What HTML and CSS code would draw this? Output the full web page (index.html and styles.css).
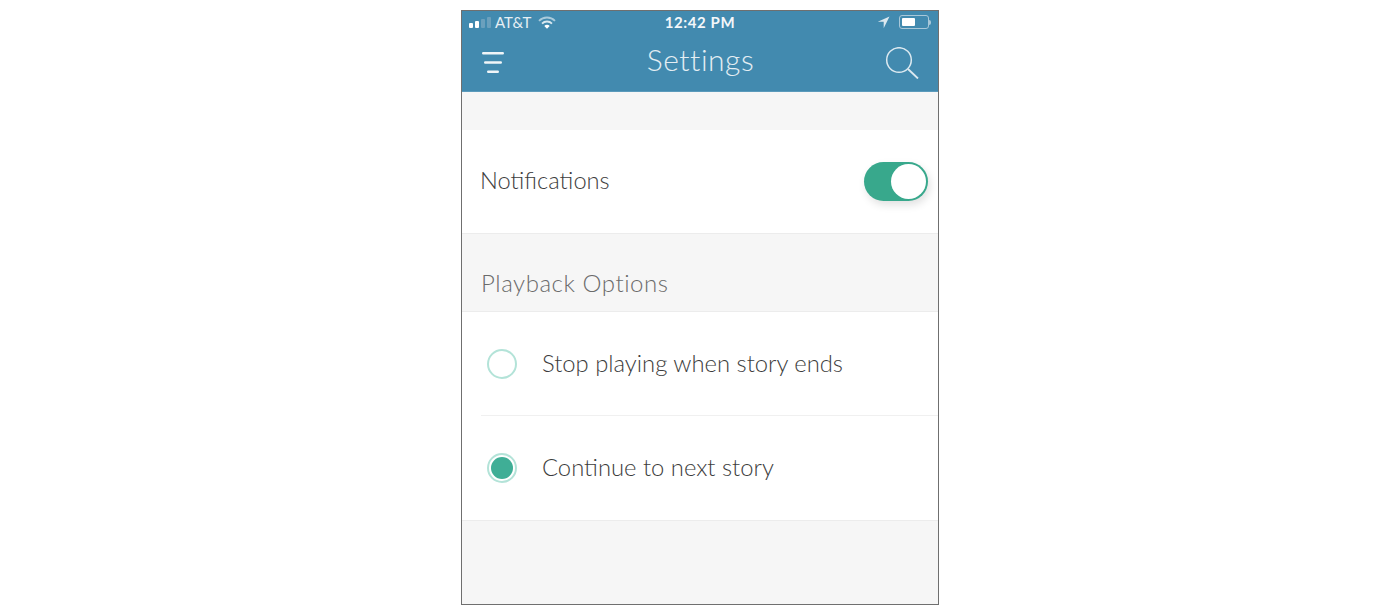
FILE: index.html
```html
<!DOCTYPE html>
<html lang="en">
<head>
    <meta charset="UTF-8">
    <title>Settings</title>
    <link rel="stylesheet" href="styles.css">
</head>
<body>
    <div class="phone">
        <div class="topbar">
            <div class="status">
                <div class="status-left">
                    <span class="signal"><i class="on"></i><i class="on"></i><i></i><i></i></span>
                    <span>AT&amp;T</span>
                    <svg class="wifi" width="18" height="13" viewBox="0 0 18 13">
                        <path d="M1 4.800a11.300 11.300 0 0 1 16 0" fill="none" stroke="#fff" stroke-opacity=".55" stroke-width="1.800"/>
                        <path d="M4 7.600a7 7 0 0 1 10 0" fill="none" stroke="#fff" stroke-opacity=".8" stroke-width="1.800"/>
                        <path d="M6.300 10a3.400 3.400 0 0 1 5.400 0L9 12.800z" fill="#fff"/>
                    </svg>
                </div>
                <div class="time">12:42 PM</div>
                <div class="status-right">
                    <svg width="13" height="13" viewBox="0 0 13 13">
                        <path d="M12.500 .5L.8 5.800h5.900v6.400z" fill="#dbe8ef"/>
                    </svg>
                    <span class="battery"><i></i></span>
                    <span class="nub"></span>
                </div>
            </div>
            <div class="header">
                <svg class="menu" width="24" height="22" viewBox="0 0 24 22">
                    <path d="M1.200 2.200h19.600M3.200 11.500h15.600M6.200 20.800h9.600" stroke="#f0f5f8" stroke-width="2.400" stroke-linecap="round" fill="none"/>
                </svg>
                <h1>Settings</h1>
                <svg class="search" width="34" height="32" viewBox="0 0 34 32">
                    <circle cx="14" cy="13" r="12.300" fill="none" stroke="#dce9f0" stroke-width="1.500"/>
                    <path d="M23 22l10 9.500" stroke="#dce9f0" stroke-width="1.800" fill="none"/>
                </svg>
            </div>
        </div>

        <div class="spacer"></div>

        <div class="row notifications">
            <span>Notifications</span>
            <div class="switch"><div class="knob"></div></div>
        </div>

        <div class="section-title">Playback Options</div>

        <div class="options">
            <div class="option">
                <span class="radio"></span>
                <span>Stop playing when story ends</span>
            </div>
            <div class="option">
                <span class="radio checked"></span>
                <span>Continue to next story</span>
            </div>
        </div>
    </div>
</body>
</html>
```

FILE: styles.css
```css
body {
    margin: 0;
    background-color: #fff;
    font-family: Lato, "Open Sans", sans-serif;
    font-weight: 300;
    color: #3d3d3d;
}
.phone {
    box-sizing: border-box;
    width: 478px;
    height: 595px;
    margin: 10px 0 0 461px;
    border: 1px solid #6f6f6f;
    background-color: #f6f6f6;
    display: flex;
    flex-direction: column;
}
.topbar {
    height: 81px;
    flex: none;
    background-color: #428aaf;
    border-bottom: 1px solid #5b9abb;
    box-sizing: border-box;
    color: #fff;
}
.status {
    height: 22px;
    padding: 0 7px;
    display: grid;
    grid-template-columns: 1fr auto 1fr;
    align-items: center;
    font-size: 15px;
    font-weight: 400;
    color: #e6eff4;
}
.status-left {
    display: flex;
    align-items: center;
    gap: 4px;
}
.signal {
    display: flex;
    align-items: flex-end;
    gap: 2px;
    height: 11px;
}
.signal i {
    width: 4px;
    background-color: #6ba0bd;
    border-radius: 1px;
}
.signal i:nth-child(1) { height: 5px; }
.signal i:nth-child(2) { height: 7px; }
.signal i:nth-child(3) { height: 9px; }
.signal i:nth-child(4) { height: 11px; }
.signal i.on {
    background-color: #fff;
}
.wifi {
    margin-left: 3px;
}
.time {
    font-weight: 700;
    letter-spacing: .6px;
    color: #f3f7fa;
}
.status-right {
    display: flex;
    justify-content: flex-end;
    align-items: center;
}
.status-right svg {
    margin-right: 9px;
}
.battery {
    width: 30px;
    height: 14px;
    box-sizing: border-box;
    border: 1px solid #a9c8d9;
    border-radius: 3px;
    padding: 2px;
}
.battery i {
    display: block;
    width: 13px;
    height: 8px;
    background-color: #fff;
    border-radius: 1px;
}
.nub {
    width: 2px;
    height: 5px;
    background-color: #a9c8d9;
    border-radius: 0 2px 2px 0;
}
.header {
    height: 57px;
    padding: 0 19px 0 20px;
    display: grid;
    grid-template-columns: 1fr auto 1fr;
    align-items: center;
}
.header h1 {
    margin: 0 0 6px 0;
    font-size: 30px;
    font-weight: 300;
    letter-spacing: .5px;
    color: #e4eef3;
}
.search {
    justify-self: end;
    margin-bottom: -3px;
}
.spacer {
    height: 38px;
    flex: none;
}
.row {
    height: 104px;
    flex: none;
    box-sizing: border-box;
    padding: 0 10px 0 18px;
    background-color: #fff;
    border-bottom: 1px solid #ececec;
    display: flex;
    align-items: center;
    justify-content: space-between;
    font-size: 23.700px;
}
.row span {
    margin-bottom: 3px;
}
.switch {
    position: relative;
    width: 64px;
    height: 39px;
    background-color: #38a88c;
    border-radius: 20px;
    box-shadow: 2px 4px 8px rgba(0, 0, 0, .12);
}
.knob {
    position: absolute;
    top: 2px;
    right: 2px;
    width: 35px;
    height: 35px;
    background-color: #fff;
    border-radius: 50%;
}
.section-title {
    height: 77px;
    flex: none;
    box-sizing: border-box;
    padding: 34px 19px 0;
    font-size: 24px;
    letter-spacing: .55px;
    color: #6b6b6b;
}
.options {
    background-color: #fff;
    border-top: 1px solid #ececec;
    border-bottom: 1px solid #ececec;
    flex: none;
    padding-left: 19px;
}
.option {
    height: 103px;
    display: flex;
    align-items: center;
    gap: 25px;
    font-size: 23.800px;
}
.option span:last-child {
    margin-bottom: 2px;
}
.option + .option {
    height: 104px;
    border-top: 1px solid #f0f0f0;
}
.radio {
    box-sizing: border-box;
    width: 30px;
    height: 30px;
    margin-left: 6px;
    border: 2px solid #b3e3d8;
    border-radius: 50%;
    background-clip: content-box;
    padding: 2px;
}
.radio.checked {
    background-color: #3fae96;
}
```
